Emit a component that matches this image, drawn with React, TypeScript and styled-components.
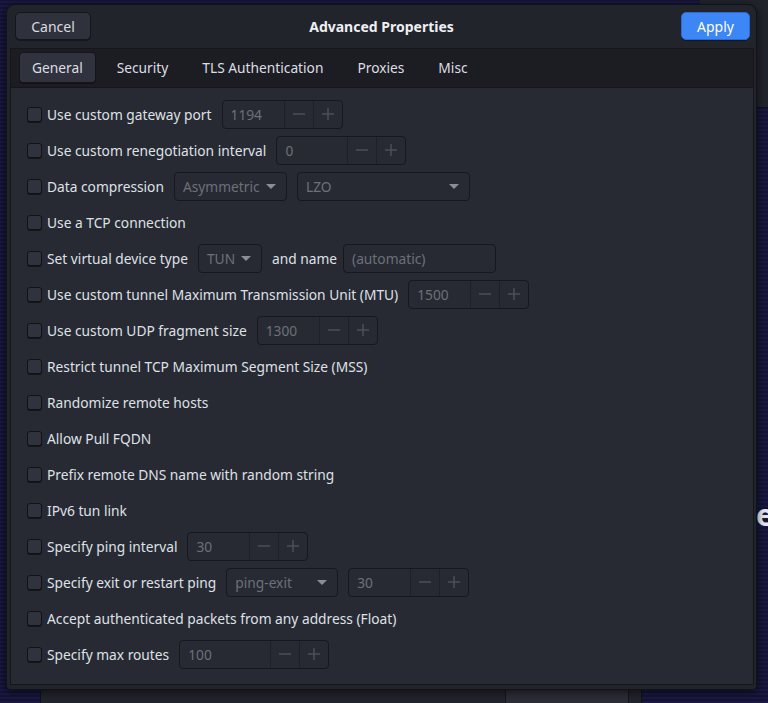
import React from 'react';
import styled, { createGlobalStyle } from 'styled-components';

const GlobalStyle = createGlobalStyle`
  html, body {
    margin: 0;
    padding: 0;
    background: #17163a;
  }
  * {
    box-sizing: border-box;
  }
`;

const Desktop = styled.div`
  position: relative;
  width: 768px;
  height: 703px;
  overflow: hidden;
  font-family: "Noto Sans", "Open Sans", sans-serif;
  font-size: 13.75px;
  background: repeating-linear-gradient(0deg, #1a1942 0px, #1a1942 2px, #141335 2px, #141335 4px);
`;

const BackWindow = styled.div`
  position: absolute;
  left: 40px;
  top: 120px;
  width: 602px;
  height: 620px;
  background: #22242c;
  border: 1px solid #111216;
`;

const BackButton = styled.div`
  position: absolute;
  left: 505px;
  top: 686px;
  width: 124px;
  height: 20px;
  border: 1px solid #15161a;
  border-radius: 4px;
  background: #2b2e37;
`;

const SideWindow = styled.div`
  position: absolute;
  left: 700px;
  top: 0;
  width: 120px;
  height: 108px;
  background: #22242c;
  border-bottom: 1px solid #111216;
`;

const BigGlyph = styled.div`
  position: absolute;
  left: 756px;
  top: 494px;
  font-size: 30px;
  font-weight: bold;
  color: #e8e8ee;
`;

const Dialog = styled.div`
  position: absolute;
  left: 6px;
  top: 4px;
  width: 751px;
  height: 686px;
  background: #22242c;
  border: 1px solid #121317;
  border-radius: 9px 9px 4px 4px;
  box-shadow: 0 2px 10px rgba(0, 0, 0, 0.6);
  display: flex;
  flex-direction: column;
`;

const Header = styled.div`
  height: 43px;
  flex: none;
  display: flex;
  align-items: center;
  justify-content: space-between;
  padding: 0 6px 1px 8px;
  position: relative;
`;

const Title = styled.div`
  position: absolute;
  left: 0;
  right: 0;
  text-align: center;
  font-weight: bold;
  font-size: 14px;
  color: #eeeff2;
  pointer-events: none;
`;

const HeaderButton = styled.button<{ $primary?: boolean; $w: number }>`
  width: ${p => p.$w}px;
  height: 28px;
  border-radius: 5px;
  font: inherit;
  font-size: 14px;
  position: relative;
  z-index: 1;
  color: ${p => (p.$primary ? '#ffffff' : '#d9dbe0')};
  background: ${p => (p.$primary ? '#3d86f6' : '#2f323c')};
  border: 1px solid ${p => (p.$primary ? '#2a6ad6' : '#15161b')};
  box-shadow: 0 1px 0 rgba(0, 0, 0, 0.35);
`;

const Notebook = styled.div`
  flex: 1;
  margin: 0 2px 4px 3px;
  border: 1px solid #15161a;
  display: flex;
  flex-direction: column;
  min-height: 0;
`;

const TabBar = styled.div`
  height: 39px;
  flex: none;
  background: #1c1d23;
  border-bottom: 1px solid #15161a;
  display: flex;
  align-items: center;
  gap: 8px;
  padding: 0 0 2px 8px;
`;

const Tab = styled.div<{ $active?: boolean }>`
  height: 31px;
  padding: 0 12px;
  display: flex;
  align-items: center;
  color: #dcdee3;
  border-radius: 4px;
  background: ${p => (p.$active ? '#30333d' : 'transparent')};
  border: 1px solid ${p => (p.$active ? '#15161a' : 'transparent')};
  box-shadow: ${p => (p.$active ? '0 1px 0 rgba(0,0,0,0.35)' : 'none')};
`;

const Content = styled.div`
  flex: 1;
  background: #272a33;
  padding: 8px 0 0 16px;
  display: flex;
  flex-direction: column;
`;

const Row = styled.div`
  height: 36px;
  display: flex;
  align-items: center;
  gap: 10px;
  color: #dfe1e6;
`;

const CheckLabel = styled.label`
  display: flex;
  align-items: center;
  gap: 5px;
`;

const Check = styled.span`
  width: 15px;
  height: 15px;
  border-radius: 3px;
  background: #30333d;
  border: 1px solid #111216;
  box-shadow: 0 1px 0 rgba(0, 0, 0, 0.5);
  flex: none;
`;

const Field = styled.div<{ $w: number }>`
  width: ${p => p.$w}px;
  height: 29px;
  border: 1px solid #17181d;
  border-radius: 4px;
  background: #272a33;
  display: flex;
  align-items: stretch;
  color: #6d7079;
`;

const FieldText = styled.div`
  flex: 1;
  display: flex;
  align-items: center;
  padding-left: 8px;
`;

const SpinBtn = styled.div`
  width: 29px;
  flex: none;
  display: flex;
  align-items: center;
  justify-content: center;
  border-left: 1px solid #1e2026;
`;

const Combo = styled(Field)`
  justify-content: space-between;
  padding-right: 10px;
`;

const Arrow = styled.span`
  width: 0;
  height: 0;
  border-left: 5px solid transparent;
  border-right: 5px solid transparent;
  border-top: 5px solid #8a8d95;
  align-self: center;
  margin-left: 6px;
`;

const InlineText = styled.span<{ $tight?: boolean }>`
  margin-right: ${p => (p.$tight ? '-4px' : '0')};
`;

const MinusIcon = () => (
  <svg width="14" height="14" viewBox="0 0 14 14">
    <path d="M1 7h12" stroke="#4c4f57" strokeWidth="1.5" />
  </svg>
);

const PlusIcon = () => (
  <svg width="14" height="14" viewBox="0 0 14 14">
    <path d="M1 7h12M7 1v12" stroke="#4c4f57" strokeWidth="1.5" />
  </svg>
);

const Spin = ({ value, w }: { value: string; w: number }) => (
  <Field $w={w}>
    <FieldText>{value}</FieldText>
    <SpinBtn><MinusIcon /></SpinBtn>
    <SpinBtn><PlusIcon /></SpinBtn>
  </Field>
);

const Drop = ({ value, w }: { value: string; w: number }) => (
  <Combo $w={w}>
    <FieldText>{value}</FieldText>
    <Arrow />
  </Combo>
);

const Option = ({ label, children }: { label: string; children?: React.ReactNode }) => (
  <Row>
    <CheckLabel>
      <Check />
      {label}
    </CheckLabel>
    {children}
  </Row>
);

const tabs = ['General', 'Security', 'TLS Authentication', 'Proxies', 'Misc'];

export default function App() {
  return (
    <>
      <GlobalStyle />
      <Desktop>
        <BackWindow />
        <BackButton />
        <SideWindow />
        <BigGlyph>e</BigGlyph>
        <Dialog>
          <Header>
            <HeaderButton $w={76}>Cancel</HeaderButton>
            <Title>Advanced Properties</Title>
            <HeaderButton $w={69} $primary>Apply</HeaderButton>
          </Header>
          <Notebook>
            <TabBar>
              {tabs.map((t, i) => (
                <Tab key={t} $active={i === 0}>{t}</Tab>
              ))}
            </TabBar>
            <Content>
              <Option label="Use custom gateway port">
                <Spin value="1194" w={121} />
              </Option>
              <Option label="Use custom renegotiation interval">
                <Spin value="0" w={130} />
              </Option>
              <Option label="Data compression">
                <Drop value="Asymmetric" w={113} />
                <Drop value="LZO" w={173} />
              </Option>
              <Option label="Use a TCP connection" />
              <Option label="Set virtual device type">
                <Drop value="TUN" w={64} />
                <InlineText $tight>and name</InlineText>
                <Field $w={153}>
                  <FieldText>(automatic)</FieldText>
                </Field>
              </Option>
              <Option label="Use custom tunnel Maximum Transmission Unit (MTU)">
                <Spin value="1500" w={121} />
              </Option>
              <Option label="Use custom UDP fragment size">
                <Spin value="1300" w={121} />
              </Option>
              <Option label="Restrict tunnel TCP Maximum Segment Size (MSS)" />
              <Option label="Randomize remote hosts" />
              <Option label="Allow Pull FQDN" />
              <Option label="Prefix remote DNS name with random string" />
              <Option label="IPv6 tun link" />
              <Option label="Specify ping interval">
                <Spin value="30" w={121} />
              </Option>
              <Option label="Specify exit or restart ping">
                <Drop value="ping-exit" w={112} />
                <Spin value="30" w={121} />
              </Option>
              <Option label="Accept authenticated packets from any address (Float)" />
              <Option label="Specify max routes">
                <Spin value="100" w={150} />
              </Option>
            </Content>
          </Notebook>
        </Dialog>
      </Desktop>
    </>
  );
}
